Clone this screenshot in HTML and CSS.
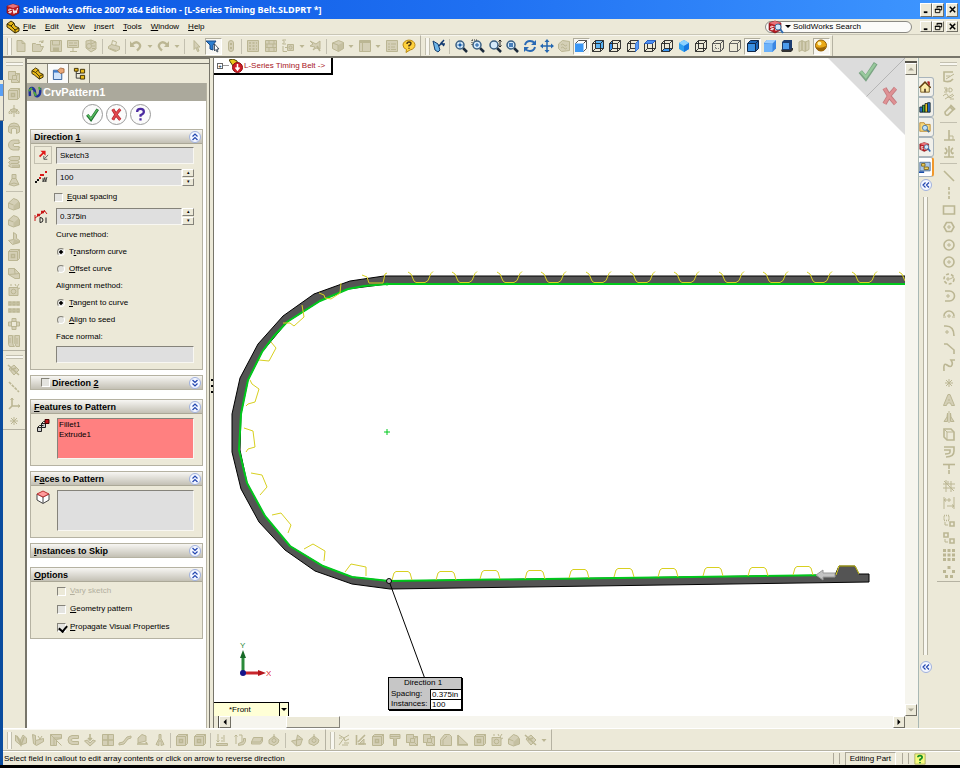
FILE: index.html
```html
<!DOCTYPE html>
<html lang="en">
<head>
  <meta charset="UTF-8">
  <meta name="viewport" content="width=device-width, initial-scale=1.0">
  <title>SolidWorks Office 2007 x64 Edition - [L-Series Timing Belt.SLDPRT *]</title>
  <link rel="stylesheet" href="styles.css">
</head>
<body>
  <!-- Icon sprite -->
  <svg class="sprite" aria-hidden="true">
    <symbol id="new" viewBox="0 0 14 14"><path class="soft" d="M3 1.500h5l3 3v8H3z"/><path d="M8 1.500v3h3"/></symbol>
    <symbol id="open" viewBox="0 0 14 14"><path class="soft" d="M1.500 12.500v-8h3l1 1h4v2h3l-2.500 5z"/><path d="M8 3q2-2 4 0M12 1v2.500h-2"/></symbol>
    <symbol id="save" viewBox="0 0 14 14"><path class="soft" d="M1.500 1.500h11v11h-11z"/><path class="solid" d="M4 8.500h6v4H4z"/><path d="M3.500 1.500v4.500h7V1.500"/></symbol>
    <symbol id="drw" viewBox="0 0 14 14"><path class="soft" d="M1.500 1.500h11v7h-11z"/><path d="M3 4h4M8 4h3M3 6.500h8M4 12.500h7M7 9v3.500"/></symbol>
    <symbol id="asm" viewBox="0 0 14 14"><path class="soft" d="M2 2l5-1 5 2v7l-5 3-5-4z"/><circle cx="5" cy="7" r="2.500"/><path d="M7 1v4l5-2M8 7h3M8 9.500h3"/></symbol>
    <symbol id="print" viewBox="0 0 14 14"><path class="soft" d="M1.500 7.500l3-2 8 2v3l-4 2-7-3z"/><path d="M4.500 6l1-4.500 4 1.500-1 4M3 9.500l6 2"/></symbol>
    <symbol id="undo" viewBox="0 0 14 14"><path class="heavy" d="M3 5.500q4-4 7-1t-2 7"/><path class="solid" d="M1 2v6h5z"/></symbol>
    <symbol id="redo" viewBox="0 0 14 14"><path class="heavy" d="M11 5.500q-4-4-7-1t2 7"/><path class="solid" d="M13 2v6H8z"/></symbol>
    <symbol id="cursor" viewBox="0 0 14 14"><path class="soft" d="M5 1.500v9l2-2 1.500 4 1.500-.5-1.500-4H11z"/></symbol>
    <symbol id="filter" viewBox="0 0 14 14"><path d="M0 2h10L7 6v5l-3-1V6z" fill="#2b7fd0" stroke="#1b4a86"/><path d="M8.500 5v7l1.500-1.500 1 2.500 1-.5-1-2.500h2z" fill="#fff" stroke="#234" stroke-width=".8"/></symbol>
    <symbol id="capsule" viewBox="0 0 14 14"><rect class="soft" x="4.500" y="1.500" width="5" height="11" rx="2.500"/><path class="solid" d="M6 4h2v2H6zM6 8h2v2H6z"/></symbol>
    <symbol id="table" viewBox="0 0 14 14"><path class="soft" d="M1.500 1.500h11v11h-11z"/><path class="bold" stroke-dasharray="2 1.500" d="M3 4h8M3 7h8M3 10h8"/></symbol>
    <symbol id="bricks" viewBox="0 0 14 14"><path class="soft" d="M1.500 1.500h11v11h-11z"/><path d="M1.500 5h11M1.500 8.500h11M5 1.500V5M9 5v3.500M5 8.500v4M10 1.500V5M3 5v3.500M10 8.500v4"/></symbol>
    <symbol id="sum" viewBox="0 0 14 14"><path d="M5 1H1.500L3.500 3 1.500 5H5M2 7v5.500h4M4 8.500h2"/><path class="soft" d="M6.500 5.500h6v6h-6z"/><circle cx="9.500" cy="8.500" r="1.500"/></symbol>
    <symbol id="flag" viewBox="0 0 14 14"><path class="soft" d="M2 2l6 3 4-3v8l-4-1-3 2 2-3-5-1 3-2z"/><path class="bold" d="M9 7l3 5"/></symbol>
    <symbol id="box" viewBox="0 0 14 14"><path class="soft" d="M1.500 4l6-2.500 5 2v6l-5 3-6-3z"/><path class="solid" d="M7 6l5.500-2.500v6L7 12.500z" opacity=".6"/><path d="M1.500 4L7 6v6"/></symbol>
    <symbol id="pane" viewBox="0 0 14 14"><path class="soft" d="M1.500 1.500h11v11h-11z"/><path class="solid" d="M2 2h10v2H2z"/><path d="M4.500 4v8"/></symbol>
    <symbol id="list" viewBox="0 0 14 14"><path class="soft" d="M1.500 1.500h11v11h-11z"/><path d="M3 5h2M6 5h5M3 8h2M6 8h4M3 10.500h2M6 10.500h5"/></symbol>
    <symbol id="help" viewBox="0 0 14 14"><path d="M1 6a6 5 0 1 1 7 5l-4 2.500.5-3A5.500 5 0 0 1 1 6z" fill="#ffd23c" stroke="#b98a14"/><path d="M5 5q0-2 2-2t2 1.500Q9 6 7 6.500v1M7 8.700v1" stroke="#4a3510" stroke-width="1.400"/></symbol>
    <symbol id="down" viewBox="0 0 8 14"><path class="solid" d="M1.500 6h5L4 9z"/></symbol>

    <symbol id="pen" viewBox="0 0 14 14"><path d="M1 2l5 3 2 6-2 2-3-2z" fill="#6db5e8" stroke="#153e6e"/><path d="M12 1L7 7M8 5h5M9 3l3 4" stroke="#123a70" stroke-width="1.400"/></symbol>
    <symbol id="lens" viewBox="0 0 14 14"><path d="M9 9l4 4" stroke="#1c2b3c" stroke-width="2.500"/><circle cx="6" cy="6" r="4" fill="#d5eafa" stroke="#3a5f82" stroke-width="1.500"/></symbol>
    <symbol id="zoom-fit" viewBox="0 0 14 14"><use href="#lens"/><path d="M6 3.500v5M3.500 6h5M5 5l2 2M7 5L5 7" stroke="#1a5ca5"/></symbol>
    <symbol id="zoom-area" viewBox="0 0 14 14"><use href="#lens"/><path d="M1 1h6M1 1v5" stroke="#333" stroke-dasharray="1 1"/><path d="M4 6h4M6 4v4" stroke="#1a5ca5"/></symbol>
    <symbol id="zoom-inout" viewBox="0 0 14 14"><use href="#lens"/><path d="M12 1v7M10.500 2.500L12 1l1.500 1.500M10.500 6.500L12 8l1.500-1.500" stroke="#222"/></symbol>
    <symbol id="zoom-sel" viewBox="0 0 14 14"><use href="#lens"/><path d="M4 5h4M4 7h4" stroke="#1a5ca5" stroke-width="1.400"/></symbol>
    <symbol id="rotate" viewBox="0 0 14 14"><path d="M2 6q1-4 5-4 3 0 4.500 2M12 8q-1 4-5 4-3 0-4.500-2" stroke="#2969b4" stroke-width="2"/><path d="M13 1v5H8zM1 13V8h5z" fill="#2969b4" stroke="none"/></symbol>
    <symbol id="pan" viewBox="0 0 14 14"><path d="M7 2v10M2 7h10" stroke="#2467b0" stroke-width="1.500"/><path d="M7 0l2.500 3h-5zM7 14l2.500-3h-5zM0 7l3-2.500v5zM14 7l-3-2.500v5z" fill="#2467b0" stroke="none"/></symbol>
    <symbol id="stamp" viewBox="0 0 14 14"><path class="soft" d="M1.500 5l4-3.500 7 1v9l-8 1-3-3z"/><path d="M4 6q2-2 3 0t3 0M4 9q2-2 3 0t3 0"/></symbol>
    <symbol id="wire" viewBox="0 0 14 14"><path d="M1.500 4.500h8v8h-8zM4.500 1.500h8v8h-8zM1.500 4.500l3-3M9.500 4.500l3-3M9.500 12.500l3-3M1.500 12.500l3-3" stroke="#222" stroke-width=".9"/></symbol>
    <symbol id="v-front" viewBox="0 0 14 14"><path d="M1.500 4.500l3-3h8v8l-3 3h-8z" fill="#fff" stroke="#444" stroke-width=".9"/><path d="M1 4.500h8.500V13H1z" fill="#3b97f5" stroke="none"/><path d="M9.500 4.500l3-3" stroke="#444"/></symbol>
    <symbol id="v-back" viewBox="0 0 14 14"><path d="M4.500 1.500h8v8h-8z" fill="#5cb4f2" stroke="none"/><use href="#wire"/></symbol>
    <symbol id="v-left" viewBox="0 0 14 14"><path d="M1.500 4.500l3-3v8l-3 3z" fill="#3b97f5" stroke="none"/><use href="#wire"/></symbol>
    <symbol id="v-right" viewBox="0 0 14 14"><use href="#wire"/><path d="M9.500 4.500l3-3v8l-3 3z" fill="#5c9cf5" stroke="#3b77d5"/></symbol>
    <symbol id="v-top" viewBox="0 0 14 14"><use href="#wire"/><path d="M1.500 4.500l3-3h8l-3 3z" fill="#4b8ff5" stroke="#2b63c5"/></symbol>
    <symbol id="v-bottom" viewBox="0 0 14 14"><path d="M1.500 12.500l3-3h8l-3 3z" fill="#3b97f5" stroke="none"/><use href="#wire"/></symbol>
    <symbol id="v-iso" viewBox="0 0 14 14"><path d="M7 1l5 3v6l-5 3-5-3V4z" fill="#30a0f0" stroke="none"/><path d="M7 1l5 3-5 3-5-3z" fill="#8cd2ff" stroke="none"/><path d="M7 7l5-3v6l-5 3z" fill="#1678e0" stroke="none"/></symbol>
    <symbol id="hidden" viewBox="0 0 14 14"><path d="M1.500 4.500h8v8h-8zM1.500 4.500l3-3h8v8l-3 3M9.500 4.500l3-3" stroke="#444" stroke-width=".9"/><path d="M4.500 2v7.500h8M4.500 9.500l-3 3" stroke="#777" stroke-dasharray="1 1"/></symbol>
    <symbol id="removed" viewBox="0 0 14 14"><path d="M1.500 4.500h8v8h-8zM1.500 4.500l3-3h8v8l-3 3M9.500 4.500l3-3" stroke="#555" stroke-width=".9"/></symbol>
    <symbol id="shade-edge" viewBox="0 0 14 14"><path d="M1.500 4.500l3-3h8v8l-3 3h-8z" fill="#1c65b8" stroke="#10284a"/><path d="M2 5h7v7H2z" fill="#3b8fe0" stroke="none"/><path d="M1.500 4.500h8v8M9.500 4.500l3-3" stroke="#10284a"/></symbol>
    <symbol id="shade" viewBox="0 0 14 14"><path d="M1 4l3-3h9v8.500L9.500 13H1z" fill="#3a86e2" stroke="none"/><path d="M1 4.500h8.500V13H1z" fill="#6cb2fa" stroke="none"/><path d="M1 4l3-3h9L9.500 4.500z" fill="#9bcdff" stroke="none"/></symbol>
    <symbol id="shadow" viewBox="0 0 14 14"><path d="M1 11l3-2h9v2l-2 2H2z" fill="#333" stroke="none"/><path d="M2 3l2-2h8v8l-2 2H2z" fill="#1b3c70" stroke="none"/><path d="M3 4h6v6H3z" fill="#4c9bec" stroke="none"/></symbol>
    <symbol id="section" viewBox="0 0 14 14"><path class="soft" d="M2 3l3-1.500 3 1.500 4-1.500v9L8 12.500 5 11l-3 1.500z"/><path class="bold" d="M5 2v9M8.500 3v9"/></symbol>
    <symbol id="gold" viewBox="0 0 14 14"><circle cx="7" cy="6.500" r="5.500" fill="#e9a816" stroke="#946008"/><path d="M2 8q5 2 10-1-1 5-5 5T2 8z" fill="#9a6508" stroke="none"/><circle cx="5.500" cy="4.500" r="2" fill="#fff3b0" stroke="none"/></symbol>

    <!-- Feature icons -->
    <symbol id="boss" viewBox="0 0 14 14"><path class="soft" d="M1.500 1.500h7v2h4v9h-8v-3h-3z"/><path d="M5.500 5.500h4v4h-4zM8.500 1.500v4M1.500 9.500h4M12.500 12.500l-3-3M9.500 5.500l3-2"/></symbol>
    <symbol id="cut" viewBox="0 0 14 14"><path class="soft" d="M1.500 3.500l2-2h9v9l-2 2h-9z"/><path class="bold" d="M4.500 6.500h3v3h-3z"/><path d="M1.500 3.500h9v9M10.500 3.500l2-2"/></symbol>
    <symbol id="revolve" viewBox="0 0 14 14"><path d="M7 1v12M4 6.500q-3 1-2 3 2-1 3 0V6.500M10 6.500q3 1 2 3-2-1-3 0V6.500z"/><path class="soft" d="M3 6q4-3 8 0L9 8H5z"/></symbol>
    <symbol id="dome" viewBox="0 0 14 14"><path class="soft" d="M1.500 11V6q1-4 5.500-4t5.500 4v5l-3 1.500V8q-2.500-2-5 0v4.500z"/><path d="M1.500 6q5-2 11 0"/></symbol>
    <symbol id="sweep" viewBox="0 0 14 14"><path class="soft" d="M12 2H6Q1.500 3 1.500 7T6 12h6V8.500H7q-2-1.500 0-3h5z"/><path d="M12 5.500l1-1.500M12 8.500l1 1.500"/></symbol>
    <symbol id="loft" viewBox="0 0 14 14"><path class="soft" d="M1.500 3l3-1.500h8v3l-2 1 2 1.500-2 1 2 2v2.500h-8l-3-1.500 2-2-2-1.500 2-2z"/><path d="M4 5.500h7M4 8.500h7M5 11h7"/></symbol>
    <symbol id="vase" viewBox="0 0 14 14"><path class="soft" d="M5 1.500h4v4l3 6-5 1.500-5-1.500 3-6z"/><path d="M2 11.500q5-3 10 0M5 5.500h4"/></symbol>
    <symbol id="fillet" viewBox="0 0 14 14"><path class="soft" d="M1.500 6l5-4.500 4 1.500 2 3v5l-6 2-5-2z"/><path class="solid" d="M6.500 13V9L12 4l.5 6.500z" opacity=".6"/><path d="M1.500 6l5 2"/></symbol>
    <symbol id="rib" viewBox="0 0 14 14"><path class="soft" d="M1.500 9.500l5-1v-7l3 2v4l3 2v2l-7 2z"/><path class="solid" d="M7 8l5 2v2l-6 1z" opacity=".6"/></symbol>
    <symbol id="hole" viewBox="0 0 14 14"><path class="soft" d="M2 4.500h9v8H2z"/><circle cx="6.500" cy="8.500" r="2.300"/><path d="M8 1l1 2M12 1l-2 3M4 1v2M11 6l2-1"/></symbol>
    <symbol id="draft" viewBox="0 0 14 14"><path class="soft" d="M1.500 2.500h6l5 5v5H8l-6.500-4z"/><path d="M7.500 2.500L8 8l-6.500.5M8 8l4.500-.5"/></symbol>
    <symbol id="pattern" viewBox="0 0 14 14"><path class="bold" d="M2 2h2v3H2zM6 2h2v3H6zM10 2h2v3h-2zM2 9h2v3H2zM6 9h2v3H6zM10 9h2v3h-2z"/></symbol>
    <symbol id="circular" viewBox="0 0 14 14"><path class="soft" d="M5 1.500h4v3H5zM5 9.500h4v3H5zM1.500 5h3v4h-3zM9.500 5h3v4h-3z"/><path d="M4 5l1-1M9 4l1 1M4 9l1 1M9 10l1-1"/></symbol>
    <symbol id="mirror" viewBox="0 0 14 14"><path class="soft" d="M1.500 1.500h4v8l2 3h-5l-1-2zM8 1.500h4.500v11H9l-1-3z"/><path d="M7 1v9M3 4v5M10 4v6"/></symbol>
    <symbol id="plane" viewBox="0 0 14 14"><path class="soft" d="M2 6l5-4 5 5-5 5z"/><path class="bold" d="M1 2l11 10M4 7l5-2"/></symbol>
    <symbol id="axis" viewBox="0 0 14 14"><path class="bold" stroke-dasharray="3 1" d="M2 2l10 10"/></symbol>
    <symbol id="csys" viewBox="0 0 14 14"><path class="bold" d="M5 1v8h8M5 9l-3 3"/><path d="M3.500 3L5 1l1.500 2M11 7.500L13 9l-2 1.500"/></symbol>
    <symbol id="point" viewBox="0 0 14 14"><path d="M7 3v8M3 7h8M4 4l6 6M10 4l-6 6"/></symbol>

    <!-- Sheet metal and surface icons -->
    <symbol id="flange" viewBox="0 0 14 14"><path class="soft" d="M1.500 2l5 5V12l-5-4zM6.500 12V7L9 2l3.500 3v5z"/><path class="bold" d="M3 3l4 9 3-8"/></symbol>
    <symbol id="edge" viewBox="0 0 14 14"><path class="soft" d="M1.500 1.500l3 1v5l8-2v3l-7 4-3-2z"/><path d="M4.500 8v4M7 3l2 3 2-3"/></symbol>
    <symbol id="miter" viewBox="0 0 14 14"><path class="soft" d="M1.500 1.500h11v4l-5 1v6h-6z"/><path d="M1.500 1.500l11 11M5 5h7M5 5v7"/></symbol>
    <symbol id="hem" viewBox="0 0 14 14"><path class="soft" d="M12.500 2.500H6Q2 3 2 7t4 4.500h6.500v-3H7Q5 8 5 7t2-1.500h5.500z"/></symbol>
    <symbol id="jog" viewBox="0 0 14 14"><path class="bold" d="M7 1v6M5 5l2 2 2-2"/><path class="soft" d="M1.500 8l3-1 2.500 3 3-3 2.500 1-5.500 5z"/></symbol>
    <symbol id="grid4" viewBox="0 0 14 14"><path class="soft" d="M1.500 1.500h11v11h-11z"/><path class="bold" d="M7 1v12M1 7h12"/></symbol>
    <symbol id="step" viewBox="0 0 14 14"><path class="soft" d="M1 10l4-1 4-5 4-1v2l-3 1-4 5-5 1z"/></symbol>
    <symbol id="fold" viewBox="0 0 14 14"><path class="soft" d="M3 10V5l4-3.500 4 1.500v5z"/><path class="bold" d="M2 11h10l-1-2"/></symbol>
    <symbol id="cone" viewBox="0 0 14 14"><path class="soft" d="M6 1.500h2v4l3 6-3 1V8H6v4.500l-3-1 3-6z"/></symbol>
    <symbol id="arrows" viewBox="0 0 14 14"><path d="M3 1v8M1.500 7.500L3 9l1.500-1.500M9 2v7M6 5h2M6 8h2"/><path class="soft" d="M1.500 10.500h11v2h-11z"/></symbol>
    <symbol id="lift" viewBox="0 0 14 14"><path d="M3 11V2M1.500 3.500L3 2l1.500 1.500M6 2h3v7"/><path class="soft" d="M5.500 12.500l5-1 2-3v-3h-2v3l-5 2z"/></symbol>
    <symbol id="flat" viewBox="0 0 14 14"><path class="soft" d="M1.500 9l2-4.500h9v4l-2 2.500h-9z"/><path d="M1.500 9h9l2-4.500"/></symbol>
    <symbol id="knob" viewBox="0 0 14 14"><path class="soft" d="M2 7l5-4 5 4-1 3-4 2.500-5-2z"/><circle cx="7" cy="7.500" r="2"/><path d="M7 1v4"/></symbol>
    <symbol id="corner" viewBox="0 0 14 14"><path class="soft" d="M1.500 8l5-1 1-5 5 4-2 6-4 1z"/><path d="M6.500 7v5.500M6.500 7l6-1"/></symbol>
    <symbol id="weld" viewBox="0 0 14 14"><path d="M2 12L7 5l5-3M2 2l5 3 1 3 4-2M7 10h5M5 12h6M2 5h3"/></symbol>
    <symbol id="trim" viewBox="0 0 14 14"><path class="bold" d="M2.500 2v10M4 11h8M4 9l7-7"/><path class="soft" d="M5 11l5-5v5z"/></symbol>
    <symbol id="pipe" viewBox="0 0 14 14"><path class="soft" d="M2 1.500h10v4H8.500v7h-3v-7H2z"/><path d="M2 3.500h10M7 5v7"/></symbol>
    <symbol id="wedge" viewBox="0 0 14 14"><path class="soft" d="M2 2l10 9.500H2z"/><path class="bold" d="M2 2v10h10"/></symbol>
    <symbol id="round" viewBox="0 0 14 14"><path class="soft" d="M1.500 12.500v-6l4-5h5l2 2v9z"/><path d="M4 12V7l4-4"/></symbol>

    <!-- Sketch icons -->
    <symbol id="sk-edit" viewBox="0 0 14 14"><path class="bold" d="M11 2H2v9q6 2 9-2"/><path d="M4 9l8-5M4 6h4"/></symbol>
    <symbol id="sk-3d" viewBox="0 0 14 14"><path d="M2 1h3v2H3h2v2H2M7 1v4q4 0 3-3-1-1-3-1M1 9q4-4 5 0t6-1M3 12l8-5M8 12h4"/></symbol>
    <symbol id="sk-modify" viewBox="0 0 14 14"><path class="bold" d="M3 8l5-5 3 3-5 5q-3 1-3-3zM8 3l1-1.500L12.500 5 11 6"/></symbol>
    <symbol id="sk-perp" viewBox="0 0 14 14"><path class="bold" d="M2 12h11M7 2v10"/><path d="M7 8h4v4"/></symbol>
    <symbol id="sk-rel" viewBox="0 0 14 14"><path class="bold" d="M2 12h10M7 1v11M3 3q4 3 0 6M11 3q-4 3 0 6"/><path d="M2 8h3M9 8h3"/></symbol>
    <symbol id="sk-line" viewBox="0 0 14 14"><path class="bold" d="M2 2l10 10"/></symbol>
    <symbol id="sk-center" viewBox="0 0 14 14"><path class="bold" d="M7 1v12" stroke-dasharray="3 1.500"/></symbol>
    <symbol id="sk-rect" viewBox="0 0 14 14"><path class="bold" d="M1.500 3h11v8h-11z"/></symbol>
    <symbol id="sk-poly" viewBox="0 0 14 14"><path class="bold" d="M4.500 2.500h5L12 7l-2.500 4.500h-5L2 7z"/><path d="M5 7h4M7 5v4"/></symbol>
    <symbol id="sk-circle" viewBox="0 0 14 14"><circle class="bold" cx="7" cy="7" r="5"/><path d="M5 7h4M7 5v4"/></symbol>
    <symbol id="sk-percircle" viewBox="0 0 14 14"><circle class="bold" cx="7" cy="7" r="5" stroke-dasharray="3 2"/><path d="M4 7h4M6 5v4M8 7l4-2"/></symbol>
    <symbol id="sk-arc" viewBox="0 0 14 14"><path class="bold" d="M3 2h4.500a5 5 0 0 1 0 10H3"/><path d="M4 7h4M6 5v4"/></symbol>
    <symbol id="sk-arc3" viewBox="0 0 14 14"><path class="bold" d="M2 9a5 5 0 0 1 10 0"/><path d="M5 9h4M7 7v4M1 10h3M10 10h3"/></symbol>
    <symbol id="sk-fillet" viewBox="0 0 14 14"><path class="bold" d="M2 2h2q8 0 8 10"/><path d="M3 8h4M5 6v4"/></symbol>
    <symbol id="sk-chamfer" viewBox="0 0 14 14"><path class="bold" d="M2 3h3l7 6v4"/></symbol>
    <symbol id="sk-spline" viewBox="0 0 14 14"><path class="bold" d="M2 13Q1 4 5 7t5 0q1-2-1-5h4"/></symbol>
    <symbol id="sk-text" viewBox="0 0 14 14"><path class="soft" d="M6 1.500h2l4.500 11h-3L8.500 10h-3l-1 2.500h-3z"/><path d="M6 7h2"/></symbol>
    <symbol id="sk-mirror" viewBox="0 0 14 14"><path d="M7 1v12"/><path class="soft" d="M5.500 3v8.500H2L5 7zM8.500 3v8.500H12L9 7z"/></symbol>
    <symbol id="sk-convert" viewBox="0 0 14 14"><path class="bold" d="M2 2h7l3 3v8H5L2 10z"/><path d="M2 2l3 3h7M5 5v8"/></symbol>
    <symbol id="sk-offset" viewBox="0 0 14 14"><path class="bold" d="M2 2h10v4q0 6-8 6M2 5h6v2q0 2-5 2"/></symbol>
    <symbol id="sk-trim" viewBox="0 0 14 14"><path class="bold" d="M1 2.500h12"/><path class="bold" d="M7 3v10" stroke-dasharray="4 1"/></symbol>
    <symbol id="sk-ext" viewBox="0 0 14 14"><path d="M1 5h12M1 9h12M4 1v12M9 2v11M2 2l10 10M6 2v3"/></symbol>
    <symbol id="sk-dim" viewBox="0 0 14 14"><path d="M2 1v12M12 1v12M2 4h7M5 10h7M4 2.500L2 4l2 1.500M10 8.500l2 1.500-2 1.500M7 2v4"/></symbol>
    <symbol id="sk-move" viewBox="0 0 14 14"><path class="bold" d="M2 1.500h5v5H2z" stroke-dasharray="1 1"/><path class="bold" d="M8 8h4v4H8z"/><path d="M3 8v3h3"/></symbol>
    <symbol id="sk-copy" viewBox="0 0 14 14"><path class="bold" d="M2 2h4v4H2zM8 8h4v4H8z"/><path d="M3 8v3h3"/></symbol>
    <symbol id="sk-grid" viewBox="0 0 14 14"><path class="solid" d="M1 1h3v3H1zM5.500 1h3v3h-3zM10 1h3v3h-3zM1 5.500h3v3H1zM5.500 5.500h3v3h-3zM10 5.500h3v3h-3zM1 10h3v3H1zM5.500 10h3v3h-3zM10 10h3v3h-3z"/></symbol>
    <symbol id="sk-ring" viewBox="0 0 14 14"><path class="solid" d="M5.500 1h3v3h-3zM1 5h3v3H1zM10 5h3v3h-3zM3 10h3v3H3zM8 10h3v3H8z"/></symbol>

    <!-- Colour icons -->
    <symbol id="sw" viewBox="0 0 14 14"><path d="M1 3l6-2 6 2v7l-6 3-6-3z" fill="#b81c22" stroke="#6a0c10" stroke-width=".6"/><path d="M1 3l6-2 6 2-6 2z" fill="#e8737a" stroke="none"/><path d="M5.500 6.500q-3-1-3 .5t3 1.500q0 2-3 1M7 6l1 4.500 1-3 1 2.500 1.500-5" stroke="#fff"/></symbol>
    <symbol id="sw-search" viewBox="0 0 16 14"><use href="#sw" width="14" height="14"/><circle cx="10" cy="7" r="3" fill="#cfe8fa" stroke="#3f6f9c"/><path d="M12 9l3 4" stroke="#2f6cb0" stroke-width="2"/></symbol>
    <symbol id="part" viewBox="0 0 14 14"><path d="M1 4l4-3 3 2 1 3 4 2v3l-4 2-5-4-3-2z" fill="#e8b818" stroke="#3a2d05"/><path d="M1 4l4 2 4 4v3M5 6l3-3M9 10l4-2" stroke="#3a2d05"/></symbol>
    <symbol id="prop" viewBox="0 0 14 14"><path d="M1.500 3.500h9v10h-9z" fill="#cfe4fb" stroke="#2b5c9c"/><path d="M2 4h8v2H2z" fill="#3c7ed0" stroke="none"/><path d="M6 4l3-3 4 1v4L9 7z" fill="#e9a878" stroke="#8a4c1e" stroke-width=".7"/></symbol>
    <symbol id="config" viewBox="0 0 14 14"><path d="M3.500 3v9M3.500 7H8M3.500 12H8" stroke="#333"/><path d="M1.500 1.500h4v3h-4zM8 2.500h4.500v4H8zM8 9h4.500v4H8z" fill="#e8b818" stroke="#3a2d05"/></symbol>
    <symbol id="curve" viewBox="0 0 14 14"><path d="M2 11Q1 2 4 3t3 5 3 3 2-8" stroke="#1d2f9c" stroke-width="2.500"/><path d="M1 6l3-3M6 7l2 4M11 2l1 3" stroke="#4fa63a" stroke-width="2"/></symbol>
    <symbol id="error" viewBox="0 0 14 14"><path d="M0 1l4-1 4 2 1 4-5 1z" fill="#e8c81c" stroke="#463a08"/><circle cx="8.500" cy="8.500" r="5" fill="#cf1f27" stroke="#8a0d13"/><path d="M8.500 5v5M6.500 8.500l2 2.500 2-2.500" stroke="#fff" stroke-width="1.500"/></symbol>
    <symbol id="check" viewBox="0 0 20 20"><path d="M3 10.500l5 6L17 3" stroke="#1c6e2c" stroke-width="4"/><path d="M3.500 10.500l4.500 5L16.500 3.500" stroke="#56b85e" stroke-width="2.200"/></symbol>
    <symbol id="cross" viewBox="0 0 20 20"><path d="M5 3q4 8 10 14M15 3Q9 9 5 17" stroke="#a81c24" stroke-width="4"/><path d="M5 3q4 8 10 14M15 3Q9 9 5 17" stroke="#e2484e" stroke-width="2.400"/></symbol>
    <symbol id="quest" viewBox="0 0 20 20"><path d="M5.500 6.500q0-4 4.500-4t4.500 4q0 2-4.500 4.500v2M10 15v3" stroke="#4b2aa0" stroke-width="3"/></symbol>
    <symbol id="dir" viewBox="0 0 14 14"><path d="M3 9l5-5" stroke="#e01818" stroke-width="2"/><path d="M4 2h6v6z" fill="#e01818" stroke="none"/><path d="M13 7L8.500 11.500M8 8v4h4" stroke="#444"/></symbol>
    <symbol id="count" viewBox="0 0 14 14"><path d="M1 12h2M3 10h2" stroke="#111" stroke-width="2"/><path d="M5 8h2M8 5h2M11 2h2M6 5h2" stroke="#d81818" stroke-width="2"/><path d="M9 12l2-5M11 12l2-5M8 9h5M8 11h5" stroke="#222" stroke-width=".8"/></symbol>
    <symbol id="spacing" viewBox="0 0 14 14"><path d="M1 9l10-7M1 6v6M10 1l3 4" stroke="#c81818"/><path d="M3 6h3M7 3h3" stroke="#c81818" stroke-width="2.500"/><path d="M6 8.500v5q3 0 3-2.500t-3-2.500M12 8.500V14" stroke="#222"/></symbol>
    <symbol id="feat" viewBox="0 0 14 14"><path d="M1.500 9.500h4v4h-4zM5.500 5.500h4v4h-4z" fill="#ccc" stroke="#222"/><path d="M9 1.500h4v4H9z" fill="#c4151c" stroke="#400"/><path d="M1.500 9.500l2-2h4M5.500 5.500l2-2H9" stroke="#222"/></symbol>
    <symbol id="faces" viewBox="0 0 14 14"><path d="M1 4v6l6 3.500 6-3.500V4L7 7zM7 7v6" fill="#fff" stroke="#444"/><path d="M1 4l6-3 6 3-6 3z" fill="#ff9c9c" stroke="#b33"/></symbol>
    <symbol id="expand" viewBox="0 0 12 12"><circle cx="6" cy="6" r="5.500" fill="#f4f7ff" stroke="#9fb0dc"/><path d="M3.500 5.500L6 3l2.500 2.500M3.500 9L6 6.500 8.500 9" stroke="#2447b0" stroke-width="1.200"/></symbol>
    <symbol id="home" viewBox="0 0 14 14"><path d="M2 7l5-5 5 5v6H2z" fill="#fbeaa8" stroke="#6b4c10"/><path d="M0 8l7-7 7 7" stroke="#5e3a0a" stroke-width="1.500"/><path d="M6 9h2v4H6z" fill="#55402a" stroke="none"/><path d="M10 1h2v4z" fill="#b02020" stroke="#b02020"/></symbol>
    <symbol id="library" viewBox="0 0 14 14"><path d="M1 7h3v6H1zM10 2h3v11h-3z" fill="#2b74d8" stroke="#122"/><path d="M4 5h3v8H4z" fill="#38a848" stroke="#122"/><path d="M7 3h3v10H7z" fill="#e8c41c" stroke="#122"/></symbol>
    <symbol id="explorer" viewBox="0 0 14 14"><path d="M1 2h5l1 2h6v8H1z" fill="#f6d77c" stroke="#b8862a"/><circle cx="7" cy="8" r="3" fill="#bfe0fa" stroke="#42719c"/><path d="M9 10l3 3" stroke="#42719c" stroke-width="2"/></symbol>
    <symbol id="palette" viewBox="0 0 14 14"><path d="M1 1.500h12v10H1z" fill="#a9c7e8" stroke="#486a90"/><path d="M3 3h4v3H3zM6 7h5v3H6z" fill="#f2d258" stroke="#776018"/><path d="M0 13h6" stroke="#1b4fa8" stroke-width="2"/></symbol>
    <symbol id="tip" viewBox="0 0 14 14"><path d="M1 1h12v12H1z" fill="#f5fb7c" stroke="#a8a860"/><path d="M4.500 5q0-2 2.500-2t2.500 2Q9.500 6.500 7 7.500V9M7 10.500v1.500" stroke="#118a24" stroke-width="2"/></symbol>
    <symbol id="min" viewBox="0 0 10 10"><path d="M2 8h4" stroke="#000" stroke-width="2"/></symbol>
    <symbol id="restore" viewBox="0 0 10 10"><path d="M3.500 3.500v-2h5v4h-2M3 2h6M1.500 4.500h5v4h-5zM1 5h6" stroke="#000"/></symbol>
    <symbol id="close" viewBox="0 0 10 10"><path d="M2 2l6 6M8 2L2 8" stroke="#000" stroke-width="1.700"/></symbol>
    <symbol id="tri-up" viewBox="0 0 10 10"><path d="M2 6.500h6L5 3.500z" fill="#a8a593" stroke="none"/></symbol>
    <symbol id="tri-down" viewBox="0 0 10 10"><path d="M2 3.500h6L5 6.500z" fill="#a8a593" stroke="none"/></symbol>
    <symbol id="tri-left" viewBox="0 0 10 10"><path d="M6.500 2v6l-3-3z" fill="#000" stroke="none"/></symbol>
    <symbol id="tri-right" viewBox="0 0 10 10"><path d="M3.500 2v6l3-3z" fill="#000" stroke="none"/></symbol>
  </svg>

  <header class="title-bar">
    <svg class="icon app-icon"><use href="#sw"/></svg>
    <h1>SolidWorks Office 2007 x64 Edition - [L-Series Timing Belt.SLDPRT *]</h1>
    <div class="win-buttons tall">
      <button aria-label="Minimize"><svg><use href="#min"/></svg></button>
      <button aria-label="Restore"><svg><use href="#restore"/></svg></button>
      <button aria-label="Close" class="apart"><svg><use href="#close"/></svg></button>
    </div>
  </header>

  <div class="frame">
    <div class="back-window"></div>
    <nav class="menu-bar">
      <svg class="icon"><use href="#part"/></svg>
      <button><u>F</u>ile</button>
      <button><u>E</u>dit</button>
      <button><u>V</u>iew</button>
      <button><u>I</u>nsert</button>
      <button><u>T</u>ools</button>
      <button><u>W</u>indow</button>
      <button><u>H</u>elp</button>
      <label class="search">
        <svg class="icon"><use href="#sw-search"/></svg>
        <span class="caret"></span>
        <input type="text" value="SolidWorks Search" aria-label="SolidWorks Search">
      </label>
      <div class="win-buttons">
        <button aria-label="Minimize document"><svg><use href="#min"/></svg></button>
        <button aria-label="Restore document"><svg><use href="#restore"/></svg></button>
        <button aria-label="Close document" class="apart"><svg><use href="#close"/></svg></button>
      </div>
    </nav>

    <div class="toolbars top">
      <div class="toolbar standard">
        <i class="grip"></i>
        <button class="tool" aria-label="New"><svg><use href="#new"/></svg></button>
        <button class="tool" aria-label="Open"><svg><use href="#open"/></svg></button>
        <button class="tool" aria-label="Save"><svg><use href="#save"/></svg></button>
        <button class="tool" aria-label="Make drawing"><svg><use href="#drw"/></svg></button>
        <button class="tool" aria-label="Make assembly"><svg><use href="#asm"/></svg></button>
        <i class="sep"></i>
        <button class="tool" aria-label="Print"><svg><use href="#print"/></svg></button>
        <i class="sep"></i>
        <button class="tool" aria-label="Undo"><svg><use href="#undo"/></svg></button>
        <button class="tool drop" aria-label="Undo list"><svg><use href="#down"/></svg></button>
        <button class="tool" aria-label="Redo"><svg><use href="#redo"/></svg></button>
        <button class="tool drop" aria-label="Redo list"><svg><use href="#down"/></svg></button>
        <i class="sep"></i>
        <button class="tool" aria-label="Select"><svg><use href="#cursor"/></svg></button>
        <button class="tool pressed" aria-label="Selection filter"><svg><use href="#filter"/></svg></button>
        <button class="tool" aria-label="Rebuild"><svg><use href="#capsule"/></svg></button>
        <i class="sep"></i>
        <button class="tool" aria-label="Design table"><svg><use href="#table"/></svg></button>
        <button class="tool" aria-label="Texture"><svg><use href="#bricks"/></svg></button>
        <button class="tool" aria-label="Equations"><svg><use href="#sum"/></svg></button>
        <button class="tool drop" aria-label="Tools list"><svg><use href="#down"/></svg></button>
        <button class="tool" aria-label="Macro"><svg><use href="#flag"/></svg></button>
        <i class="sep"></i>
        <button class="tool" aria-label="Appearance"><svg><use href="#box"/></svg></button>
        <button class="tool drop" aria-label="Appearance list"><svg><use href="#down"/></svg></button>
        <button class="tool" aria-label="Layout"><svg><use href="#pane"/></svg></button>
        <button class="tool drop" aria-label="Layout list"><svg><use href="#down"/></svg></button>
        <button class="tool" aria-label="Options"><svg><use href="#list"/></svg></button>
        <button class="tool" aria-label="Help"><svg><use href="#help"/></svg></button>
      </div>
      <div class="toolbar view">
        <i class="grip"></i>
        <button class="tool" aria-label="Previous view"><svg><use href="#pen"/></svg></button>
        <i class="sep"></i>
        <button class="tool" aria-label="Zoom to fit"><svg><use href="#zoom-fit"/></svg></button>
        <button class="tool" aria-label="Zoom to area"><svg><use href="#zoom-area"/></svg></button>
        <button class="tool" aria-label="Zoom in/out"><svg><use href="#zoom-inout"/></svg></button>
        <button class="tool" aria-label="Zoom to selection"><svg><use href="#zoom-sel"/></svg></button>
        <button class="tool" aria-label="Rotate view"><svg><use href="#rotate"/></svg></button>
        <button class="tool" aria-label="Pan"><svg><use href="#pan"/></svg></button>
        <button class="tool" aria-label="3D drawing view"><svg><use href="#stamp"/></svg></button>
        <button class="tool pressed" aria-label="Front"><svg><use href="#v-front"/></svg></button>
        <button class="tool" aria-label="Back"><svg><use href="#v-back"/></svg></button>
        <button class="tool" aria-label="Left"><svg><use href="#v-left"/></svg></button>
        <button class="tool" aria-label="Right"><svg><use href="#v-right"/></svg></button>
        <button class="tool" aria-label="Top"><svg><use href="#v-top"/></svg></button>
        <button class="tool" aria-label="Bottom"><svg><use href="#v-bottom"/></svg></button>
        <button class="tool" aria-label="Isometric"><svg><use href="#v-iso"/></svg></button>
        <button class="tool" aria-label="Wireframe"><svg><use href="#wire"/></svg></button>
        <button class="tool" aria-label="Hidden lines visible"><svg><use href="#hidden"/></svg></button>
        <button class="tool" aria-label="Hidden lines removed"><svg><use href="#removed"/></svg></button>
        <button class="tool pressed" aria-label="Shaded with edges"><svg><use href="#shade-edge"/></svg></button>
        <button class="tool" aria-label="Shaded"><svg><use href="#shade"/></svg></button>
        <button class="tool" aria-label="Shadows"><svg><use href="#shadow"/></svg></button>
        <button class="tool" aria-label="Section view"><svg><use href="#section"/></svg></button>
        <button class="tool pressed" aria-label="RealView"><svg><use href="#gold"/></svg></button>
      </div>
    </div>

    <main class="workspace">
      <div class="side-tools left">
        <i class="grip"></i>
        <div class="tool-column features">
          <button class="tool" aria-label="Extruded boss"><svg><use href="#boss"/></svg></button>
          <button class="tool" aria-label="Extruded cut"><svg><use href="#cut"/></svg></button>
          <button class="tool" aria-label="Revolve"><svg><use href="#revolve"/></svg></button>
          <button class="tool" aria-label="Revolved cut"><svg><use href="#dome"/></svg></button>
          <button class="tool" aria-label="Sweep"><svg><use href="#sweep"/></svg></button>
          <button class="tool" aria-label="Swept cut"><svg><use href="#loft"/></svg></button>
          <button class="tool" aria-label="Loft"><svg><use href="#vase"/></svg></button>
          <i class="sep"></i>
          <button class="tool" aria-label="Fillet"><svg><use href="#fillet"/></svg></button>
          <button class="tool" aria-label="Chamfer"><svg><use href="#fillet"/></svg></button>
          <button class="tool" aria-label="Rib"><svg><use href="#rib"/></svg></button>
          <button class="tool" aria-label="Shell"><svg><use href="#cut"/></svg></button>
          <button class="tool" aria-label="Draft"><svg><use href="#draft"/></svg></button>
          <button class="tool" aria-label="Hole wizard"><svg><use href="#hole"/></svg></button>
          <button class="tool" aria-label="Linear pattern"><svg><use href="#pattern"/></svg></button>
          <button class="tool" aria-label="Circular pattern"><svg><use href="#circular"/></svg></button>
          <button class="tool" aria-label="Mirror"><svg><use href="#mirror"/></svg></button>
        </div>
        <i class="rule"></i>
        <i class="grip"></i>
        <div class="tool-column">
          <button class="tool" aria-label="Plane"><svg><use href="#plane"/></svg></button>
          <button class="tool" aria-label="Axis"><svg><use href="#axis"/></svg></button>
          <button class="tool" aria-label="Coordinate system"><svg><use href="#csys"/></svg></button>
          <button class="tool" aria-label="Point"><svg><use href="#point"/></svg></button>
        </div>
        <i class="rule"></i>
      </div>

      <aside class="manager">
        <div class="tabs">
          <button aria-label="FeatureManager"><svg class="icon"><use href="#part"/></svg></button>
          <button class="active" aria-label="PropertyManager"><svg class="icon"><use href="#prop"/></svg></button>
          <button aria-label="ConfigurationManager"><svg class="icon"><use href="#config"/></svg></button>
        </div>
        <div class="sheet">
          <h2><svg class="icon"><use href="#curve"/></svg>CrvPattern1</h2>
          <div class="confirm">
            <button aria-label="OK"><svg class="icon"><use href="#check"/></svg></button>
            <button aria-label="Cancel"><svg class="icon"><use href="#cross"/></svg></button>
            <button aria-label="Help"><svg class="icon"><use href="#quest"/></svg></button>
          </div>

          <section class="group">
            <h3><span>Direction <u>1</u></span><button aria-label="Collapse"><svg class="icon"><use href="#expand"/></svg></button></h3>
            <div class="group-body">
              <div class="row field">
                <button class="dir" aria-label="Reverse direction"><svg class="icon"><use href="#dir"/></svg></button>
                <input type="text" value="Sketch3" aria-label="Pattern direction">
              </div>
              <div class="row field">
                <svg class="icon"><use href="#count"/></svg>
                <input type="text" value="100" aria-label="Number of instances">
                <span class="spin"><button aria-label="More instances">▴</button><button aria-label="Fewer instances">▾</button></span>
              </div>
              <label class="row tick outdent"><input type="checkbox"><span><u>E</u>qual spacing</span></label>
              <div class="row field short">
                <svg class="icon"><use href="#spacing"/></svg>
                <input type="text" value="0.375in" aria-label="Spacing">
                <span class="spin"><button aria-label="More spacing">▴</button><button aria-label="Less spacing">▾</button></span>
              </div>
              <p class="row line">Curve method:</p>
              <label class="row line tick"><input type="radio" name="curve" checked><span>T<u>r</u>ansform curve</span></label>
              <label class="row line tick"><input type="radio" name="curve"><span><u>O</u>ffset curve</span></label>
              <p class="row line">Alignment method:</p>
              <label class="row line tick"><input type="radio" name="align" checked><span><u>T</u>angent to curve</span></label>
              <label class="row line tick"><input type="radio" name="align"><span><u>A</u>lign to seed</span></label>
              <p class="row line"><label for="face-normal">Face normal:</label></p>
              <div class="row normal"><input type="text" id="face-normal"></div>
            </div>
          </section>

          <section class="group collapsed">
            <h3><label><input type="checkbox"><span>Direction <u>2</u></span></label><button aria-label="Expand"><svg class="icon flip"><use href="#expand"/></svg></button></h3>
          </section>

          <section class="group">
            <h3><span><u>F</u>eatures to Pattern</span><button aria-label="Collapse"><svg class="icon"><use href="#expand"/></svg></button></h3>
            <div class="picker">
              <svg class="icon"><use href="#feat"/></svg>
              <select class="active" multiple size="4" aria-label="Features to Pattern">
                <option>Fillet1</option>
                <option>Extrude1</option>
              </select>
            </div>
          </section>

          <section class="group">
            <h3><span>F<u>a</u>ces to Pattern</span><button aria-label="Collapse"><svg class="icon"><use href="#expand"/></svg></button></h3>
            <div class="picker">
              <svg class="icon"><use href="#faces"/></svg>
              <select multiple size="4" aria-label="Faces to Pattern"></select>
            </div>
          </section>

          <section class="group collapsed">
            <h3><span><u>I</u>nstances to Skip</span><button aria-label="Expand"><svg class="icon flip"><use href="#expand"/></svg></button></h3>
          </section>

          <section class="group">
            <h3><span><u>O</u>ptions</span><button aria-label="Collapse"><svg class="icon"><use href="#expand"/></svg></button></h3>
            <div class="options">
              <label class="row tick"><input type="checkbox" disabled><span><u>V</u>ary sketch</span></label>
              <label class="row tick"><input type="checkbox"><span><u>G</u>eometry pattern</span></label>
              <label class="row tick"><input type="checkbox" checked><span><u>P</u>ropagate Visual Properties</span></label>
            </div>
          </section>
        </div>
      </aside>

      <div class="splitter"><i></i><i></i><i></i></div>

      <div class="viewport">
        <div class="canvas">
          <svg class="model" role="img" aria-label="Timing belt model">
            <defs>
              <path id="tooth-down" d="M-12 -9l3 2 3 7 2 1.500h9l3-2 3-7 2-2"/>
              <path id="tooth-up" d="M-10 0l2-7 2-1.500H6l2 1.500 2 7"/>
            </defs>
            <path class="belt" d="M2000 218H170L136 223L100 236L69 258L44 286L26 320L18 356V394L27 431L45 464L71 492L101 513L138 526L176 531L655 524V516H645L641 508H625L621 517L175 523L138 519L109 508L76 488L51 458L33 425L26 392L27 356L34 322L48 294L73 264L106 243L134 231L173 226H2000z"/>
            <path class="path" d="M2000 226H173L150 228L134 231L106 243L73 264L60 278L48 294L34 322L27 356L25 392L33 425L51 458L76 488L109 508L138 519L175 523L621 517"/>
            <circle cx="173" cy="226" r="1.500" fill="#00d020"/>
            <g class="teeth">
              <use href="#tooth-down" x="206" y="223"/><use href="#tooth-down" x="250" y="223"/>
              <use href="#tooth-down" x="295" y="223"/><use href="#tooth-down" x="339" y="223"/>
              <use href="#tooth-down" x="384" y="223"/><use href="#tooth-down" x="428" y="223"/>
              <use href="#tooth-down" x="472" y="223"/><use href="#tooth-down" x="517" y="223"/>
              <use href="#tooth-down" x="561" y="223"/><use href="#tooth-down" x="605" y="223"/>
              <use href="#tooth-down" x="650" y="223"/><use href="#tooth-down" x="697" y="223"/>
              <use href="#tooth-up" x="188" y="522"/><use href="#tooth-up" x="232" y="522"/>
              <use href="#tooth-up" x="276" y="521"/><use href="#tooth-up" x="321" y="521"/>
              <use href="#tooth-up" x="365" y="520"/><use href="#tooth-up" x="410" y="519"/>
              <use href="#tooth-up" x="454" y="519"/><use href="#tooth-up" x="499" y="518"/>
              <use href="#tooth-up" x="544" y="518"/><use href="#tooth-up" x="589" y="517"/>
              <path d="M148 217l5 2 2 6h14l2-9 2-1"/>
              <path d="M105 235l5 2 1 3 6 1 9-6 1-10"/>
              <path d="M69 265h7l4 3 10-9-2-12"/>
              <path d="M45 302l10 1 7-13-5-6"/>
              <path d="M32 348l2-2 7-2 4-13-7-5-2-4"/>
              <path d="M30 370l9 3 2 16-7 2-2 3"/>
              <path d="M37 415l11 2 5 12-7 8"/>
              <path d="M58 457l9-2 10 12-3 8"/>
              <path d="M90 491l9-5 12 7-1 10"/>
              <path d="M131 514l6-8 15 3v9"/>
              <path d="M622 517l3-9h16l4 8"/>
            </g>
            <path d="M170 374h6M173 371v6" stroke="#00c81c"/>
            <path d="M602 517l7-5v3h12v4h-12v3z" fill="#c4c4c4" stroke="#999"/>
            <path d="M175 523l36 98" stroke="#000"/>
            <circle cx="175" cy="523" r="2.500" fill="#bbb" stroke="#000"/>
          </svg>

          <svg class="triad" viewBox="0 0 36 40" role="img" aria-label="View orientation">
            <path d="M8 33V16" stroke="#2a8a3a" stroke-width="3"/><path d="M8 10l3 8H5z" fill="#176a27"/>
            <path d="M8 33h16" stroke="#c8262c" stroke-width="3"/><path d="M31 33l-8-3v6z" fill="#b3151b"/>
            <circle cx="8" cy="33" r="3" fill="#15158c"/>
            <text x="5" y="8" fill="#2a8a3a">Y</text><text x="31" y="36" fill="#e0262c">X</text>
          </svg>

          <div class="flyout">
            <button class="plus" aria-label="Expand tree">+</button><i></i>
            <svg class="icon"><use href="#error"/></svg>
            <span>L-Series Timing Belt -&gt;</span>
          </div>

          <div class="confirm-corner">
            <svg viewBox="0 0 77 77"><path d="M0 0h77v77z" fill="#dcdcdc"/><path d="M38.500 38.500L77 0" stroke="#b5b5b5"/></svg>
            <button class="ok" aria-label="Accept"><svg class="icon"><use href="#check"/></svg></button>
            <button class="no" aria-label="Discard"><svg class="icon"><use href="#cross"/></svg></button>
          </div>

          <div class="callout">
            <h4>Direction 1</h4>
            <label for="c-spacing">Spacing:</label><input id="c-spacing" type="text" value="0.375in">
            <label for="c-count">Instances:</label><input id="c-count" type="text" value="100">
          </div>

          <div class="view-name">
            <select aria-label="View orientation"><option>*Front</option></select>
            <span class="caret"></span>
          </div>
        </div>
        <div class="scroll vertical">
          <i class="split"></i>
          <button aria-label="Scroll up"><svg><use href="#tri-up"/></svg></button>
          <div class="track"></div>
          <button aria-label="Scroll down"><svg><use href="#tri-down"/></svg></button>
        </div>
        <div class="scroll horizontal">
          <i class="split"></i>
          <button aria-label="Scroll left"><svg><use href="#tri-left"/></svg></button>
          <div class="track"><div class="thumb"></div></div>
          <button aria-label="Scroll right"><svg><use href="#tri-right"/></svg></button>
        </div>
      </div>

      <aside class="task-pane">
        <button class="task" aria-label="SolidWorks Resources"><svg class="icon"><use href="#home"/></svg></button>
        <button class="task" aria-label="Design Library"><svg class="icon"><use href="#library"/></svg></button>
        <button class="task" aria-label="File Explorer"><svg class="icon"><use href="#explorer"/></svg></button>
        <button class="task" aria-label="Search"><svg class="icon"><use href="#sw-search"/></svg></button>
        <button class="task current" aria-label="View Palette"><svg class="icon"><use href="#palette"/></svg></button>
        <button class="chevron" aria-label="Open task pane"><svg class="icon"><use href="#expand"/></svg></button>
        <div class="rails"></div>
        <button class="chevron" aria-label="Open task pane"><svg class="icon"><use href="#expand"/></svg></button>
      </aside>

      <div class="side-tools right">
        <i class="grip"></i>
        <div class="tool-column">
          <button class="tool" aria-label="Sketch"><svg><use href="#sk-edit"/></svg></button>
          <button class="tool" aria-label="3D Sketch"><svg><use href="#sk-3d"/></svg></button>
          <button class="tool" aria-label="Modify sketch"><svg><use href="#sk-modify"/></svg></button>
          <i class="sep"></i>
          <button class="tool" aria-label="Add relation"><svg><use href="#sk-perp"/></svg></button>
          <button class="tool" aria-label="Display relations"><svg><use href="#sk-rel"/></svg></button>
          <i class="sep"></i>
        </div>
        <div class="tool-column sketch">
          <button class="tool" aria-label="Line"><svg><use href="#sk-line"/></svg></button>
          <button class="tool" aria-label="Centerline"><svg><use href="#sk-center"/></svg></button>
          <button class="tool" aria-label="Rectangle"><svg><use href="#sk-rect"/></svg></button>
          <button class="tool" aria-label="Polygon"><svg><use href="#sk-poly"/></svg></button>
          <button class="tool" aria-label="Circle"><svg><use href="#sk-circle"/></svg></button>
          <button class="tool" aria-label="Ellipse"><svg><use href="#sk-circle"/></svg></button>
          <button class="tool" aria-label="Perimeter circle"><svg><use href="#sk-percircle"/></svg></button>
          <button class="tool" aria-label="Tangent arc"><svg><use href="#sk-arc"/></svg></button>
          <button class="tool" aria-label="3 point arc"><svg><use href="#sk-arc3"/></svg></button>
          <button class="tool" aria-label="Sketch fillet"><svg><use href="#sk-fillet"/></svg></button>
          <button class="tool" aria-label="Sketch chamfer"><svg><use href="#sk-chamfer"/></svg></button>
          <button class="tool" aria-label="Spline"><svg><use href="#sk-spline"/></svg></button>
          <button class="tool" aria-label="Sketch point"><svg><use href="#point"/></svg></button>
          <button class="tool" aria-label="Text"><svg><use href="#sk-text"/></svg></button>
          <button class="tool" aria-label="Mirror entities"><svg><use href="#sk-mirror"/></svg></button>
          <button class="tool" aria-label="Convert entities"><svg><use href="#sk-convert"/></svg></button>
          <button class="tool" aria-label="Offset entities"><svg><use href="#sk-offset"/></svg></button>
          <button class="tool" aria-label="Trim entities"><svg><use href="#sk-trim"/></svg></button>
          <button class="tool" aria-label="Extend entities"><svg><use href="#sk-ext"/></svg></button>
          <button class="tool" aria-label="Smart dimension"><svg><use href="#sk-dim"/></svg></button>
          <button class="tool" aria-label="Move entities"><svg><use href="#sk-move"/></svg></button>
          <button class="tool" aria-label="Copy entities"><svg><use href="#sk-copy"/></svg></button>
          <button class="tool" aria-label="Linear sketch pattern"><svg><use href="#sk-grid"/></svg></button>
          <button class="tool" aria-label="Circular sketch pattern"><svg><use href="#sk-ring"/></svg></button>
        </div>
        <i class="rule"></i>
      </div>
    </main>

    <div class="toolbars bottom">
      <div class="toolbar sheet-metal">
        <i class="grip"></i>
        <button class="tool" aria-label="Base flange"><svg><use href="#flange"/></svg></button>
        <button class="tool" aria-label="Edge flange"><svg><use href="#edge"/></svg></button>
        <button class="tool" aria-label="Miter flange"><svg><use href="#miter"/></svg></button>
        <button class="tool" aria-label="Hem"><svg><use href="#hem"/></svg></button>
        <button class="tool" aria-label="Sketched bend"><svg><use href="#jog"/></svg></button>
        <button class="tool" aria-label="Closed corner"><svg><use href="#grid4"/></svg></button>
        <button class="tool" aria-label="Jog"><svg><use href="#step"/></svg></button>
        <button class="tool" aria-label="Break corner"><svg><use href="#fold"/></svg></button>
        <button class="tool" aria-label="Lofted bend"><svg><use href="#cone"/></svg></button>
        <i class="sep"></i>
        <button class="tool" aria-label="Cut"><svg><use href="#cut"/></svg></button>
        <button class="tool" aria-label="Simple hole"><svg><use href="#cut"/></svg></button>
        <i class="sep"></i>
        <button class="tool" aria-label="Unfold"><svg><use href="#arrows"/></svg></button>
        <button class="tool" aria-label="Fold"><svg><use href="#lift"/></svg></button>
        <button class="tool" aria-label="Flatten"><svg><use href="#flat"/></svg></button>
        <button class="tool" aria-label="No bends"><svg><use href="#knob"/></svg></button>
        <i class="sep"></i>
        <button class="tool" aria-label="Insert bends"><svg><use href="#corner"/></svg></button>
        <button class="tool" aria-label="Rip"><svg><use href="#knob"/></svg></button>
      </div>
      <div class="toolbar weldments">
        <i class="grip"></i>
        <button class="tool" aria-label="3D Sketch"><svg><use href="#weld"/></svg></button>
        <button class="tool" aria-label="Weldment"><svg><use href="#trim"/></svg></button>
        <button class="tool" aria-label="Structural member"><svg><use href="#cut"/></svg></button>
        <button class="tool" aria-label="Trim/Extend"><svg><use href="#pipe"/></svg></button>
        <button class="tool" aria-label="Extrude"><svg><use href="#boss"/></svg></button>
        <button class="tool" aria-label="Extrude cut"><svg><use href="#boss"/></svg></button>
        <button class="tool" aria-label="End cap"><svg><use href="#round"/></svg></button>
        <button class="tool" aria-label="Gusset"><svg><use href="#wedge"/></svg></button>
        <button class="tool" aria-label="Fillet bead"><svg><use href="#cut"/></svg></button>
        <button class="tool" aria-label="Hole wizard"><svg><use href="#hole"/></svg></button>
        <button class="tool" aria-label="Chamfer"><svg><use href="#fillet"/></svg></button>
        <button class="tool" aria-label="Reference geometry"><svg><use href="#plane"/></svg></button>
        <button class="tool drop" aria-label="More"><svg><use href="#down"/></svg></button>
      </div>
    </div>

    <footer class="status">
      <p>Select field in callout to edit array contents or click on arrow to reverse direction</p>
      <i class="cell"></i><i class="cell"></i>
      <span>Editing Part</span>
      <i class="cell"></i><i class="cell"></i>
      <button aria-label="Quick tips"><svg class="icon"><use href="#tip"/></svg></button>
    </footer>
  </div>
</body>
</html>
```
FILE: styles.css
```css
* {
  box-sizing: border-box;
}
body {
  margin: 0;
  height: 100vh;
  display: flex;
  flex-direction: column;
  overflow: hidden;
  background: #000;
  border-bottom: 3px solid #000;
  font: 8px/10px "Liberation Sans", Arial, sans-serif;
  color: #000;
}
h1, h2, h3, h4, p {
  margin: 0;
  font-size: 8px;
}
button, input, select {
  margin: 0;
  padding: 0;
  border: 0;
  border-radius: 0;
  background: none;
  font: inherit;
  color: inherit;
  appearance: none;
}
svg {
  display: block;
  fill: none;
}
.sprite {
  position: absolute;
  width: 0;
  height: 0;
}
.icon {
  width: 14px;
  height: 14px;
  flex: none;
}
.soft {
  fill: currentColor;
  fill-opacity: 0.5;
}
.solid {
  fill: currentColor;
  stroke: none;
}
.bold {
  stroke-width: 1.6;
}
.heavy {
  stroke-width: 2.4;
}

/* title and menu */
.title-bar {
  display: flex;
  align-items: center;
  height: 19px;
  flex: none;
  padding: 0 2px 0 6px;
  background: linear-gradient(90deg, #0a55e0, #1f70f2 50%, #3f97ff);
  color: #fff;
}
.title-bar h1 {
  flex: 1;
  margin-left: 3px;
  font: bold 9px/12px "Noto Sans", sans-serif;
  white-space: nowrap;
}
.win-buttons {
  display: flex;
}
.win-buttons button {
  display: flex;
  align-items: center;
  justify-content: center;
  width: 12px;
  height: 11px;
  background: #ece9d8;
  border: 1px solid;
  border-color: #fff #716f64 #716f64 #fff;
}
.win-buttons.tall button {
  height: 14px;
}
.win-buttons .apart {
  margin-left: 2px;
}
.win-buttons svg {
  width: 9px;
  height: 9px;
}
.frame {
  position: relative;
  flex: 1;
  min-height: 0;
  display: flex;
  flex-direction: column;
  border-left: 3px solid #0a4c9f;
  background: #ece9d8;
}
.back-window {
  position: absolute;
  left: -3px;
  top: 61px;
  width: 4px;
  height: 41px;
  background: linear-gradient(#ece9d8 4px, #5aa0f5 4px, #5aa0f5 16px, #ece9d8 16px);
  border-right: 1px solid #888;
  border-bottom: 1px solid #888;
}
.menu-bar {
  display: flex;
  align-items: center;
  height: 16px;
  flex: none;
  padding: 0 2px 0 3px;
  border-bottom: 1px solid #c9c6b6;
}
.menu-bar > button {
  padding: 0 3px;
  margin-right: 3px;
}
.search {
  display: flex;
  align-items: center;
  width: 147px;
  height: 12px;
  margin-left: auto;
  margin-right: 8px;
  padding-left: 2px;
  border: 1px solid #8b8a84;
  border-radius: 6px;
  background: #fbfbf9;
}
.search .icon {
  width: 16px;
}
.search input {
  flex: 1;
  min-width: 0;
  height: 10px;
  padding-left: 2px;
}
.caret {
  border: 3px solid transparent;
  border-top-color: #000;
  border-bottom: 0;
}
.search .caret {
  margin-left: 1px;
}

/* toolbars */
.toolbars {
  display: flex;
  flex: none;
  height: 23px;
  color: #bbb693;
}
.top {
  border-bottom: 2px solid #77756a;
}
.bottom {
  border-top: 1px solid #fff;
  border-bottom: 1px solid #b5b2a2;
}
.toolbar {
  display: flex;
  align-items: center;
  justify-content: space-between;
  flex: none;
  padding: 0 2px 0 4px;
  border-right: 1px solid #b5b2a2;
  border-top: 1px solid #f8f7f0;
}
.standard { width: 418px; }
.view { width: 412px; }
.sheet-metal { width: 323px; }
.weldments { width: 226px; }
.tool {
  display: flex;
  align-items: center;
  justify-content: center;
  width: 17px;
  height: 17px;
  flex: none;
}
.tool svg {
  width: 14px;
  height: 14px;
  flex: none;
  stroke: currentColor;
}
.tool.drop {
  width: 9px;
}
.tool.drop svg {
  width: 8px;
}
.tool.pressed {
  background: #f8f7f2;
  border: 1px solid;
  border-color: #b0ad9c #fff #fff #b0ad9c;
}
.grip {
  width: 5px;
  height: 17px;
  flex: none;
  border: 1px solid #c3c0b0;
  border-width: 0 1px;
  background: #f8f7f0;
}
.sep {
  width: 1px;
  height: 15px;
  margin: 0 2px;
  background: #c3c0b0;
}

/* work area */
.workspace {
  flex: 1;
  min-height: 0;
  display: flex;
}
.side-tools {
  display: flex;
  flex-direction: column;
  align-items: center;
  flex: none;
  padding-top: 4px;
  color: #bbb693;
}
.left {
  width: 22px;
}
.right {
  width: 23px;
}
.side-tools .grip {
  width: 17px;
  height: 4px;
  border-width: 1px 0;
  margin-bottom: 2px;
}
.side-tools .sep {
  width: 17px;
  height: 1px;
  margin: 3px 0;
}
.rule {
  align-self: stretch;
  height: 1px;
  margin-bottom: 4px;
  background: #b5b2a2;
}
.tool-column {
  display: flex;
  flex-direction: column;
  align-items: center;
  justify-content: space-around;
}
.features {
  height: 282px;
}
.sketch {
  height: 414px;
}

/* property manager */
.manager {
  display: flex;
  flex-direction: column;
  width: 185px;
  flex: none;
  padding-top: 4px;
  border: solid #77756a;
  border-width: 1px 1px 0 2px;
}
.tabs {
  display: flex;
  height: 20px;
  flex: none;
  border-top: 1px solid #77756a;
}
.tabs button {
  display: flex;
  align-items: center;
  justify-content: center;
  width: 21px;
  border-right: 1px solid #8b897c;
}
.tabs .active {
  background: #fbfbf9;
}
.tabs .icon {
  width: 13px;
  height: 13px;
}
.sheet {
  flex: 1;
  background: #fff;
  padding: 0 3px;
  margin-right: 2px;
  border-right: 1px solid #b5b2a2;
}
.manager h2 {
  display: flex;
  align-items: center;
  height: 18px;
  margin: 0 -3px;
  padding-left: 1px;
  gap: 1px;
  background: #aba99c;
  color: #fff;
  font-size: 11px;
}
.confirm {
  display: flex;
  justify-content: center;
  gap: 3px;
  padding: 3px 0 4px;
}
.confirm button {
  width: 21px;
  height: 21px;
  padding: 2px;
  border: 1px solid #9a9a9a;
  border-radius: 50%;
  background: #fbfbfb;
}
.confirm .icon {
  width: 15px;
  height: 15px;
}
.group {
  margin-bottom: 5px;
  border: 1px solid #b5b2a2;
  background: #ece9d8;
}
.group.collapsed {
  margin-bottom: 9px;
}
.group h3 {
  display: flex;
  align-items: center;
  justify-content: space-between;
  height: 14px;
  padding: 0 1px 0 3px;
  border-bottom: 1px solid #aba897;
  background: linear-gradient(#f7f6f3, #c3c0b4);
  font-size: 9px;
}
.group.collapsed h3 {
  height: 13px;
  border-bottom: 0;
}
.group h3 label {
  display: flex;
  align-items: center;
  gap: 2px;
  padding-left: 7px;
}
.group h3 .icon {
  width: 12px;
  height: 12px;
}
.flip {
  transform: rotate(180deg);
}
.group-body {
  padding: 0 8px 6px 3px;
}
.row {
  display: flex;
  align-items: center;
  height: 18px;
}
.row.field {
  height: 22px;
}
.row.short {
  height: 20px;
}
.row.line {
  height: 17px;
  padding-left: 22px;
}
.row.normal {
  padding-left: 22px;
}
.field > .icon {
  margin-right: 8px;
}
.dir {
  width: 18px;
  height: 18px;
  margin-right: 4px;
  padding: 2px;
  border: 1px solid #c3c0b0;
}
.dir .icon {
  width: 12px;
  height: 12px;
}
.row input[type="text"] {
  flex: 1;
  min-width: 0;
  height: 17px;
  padding: 0 3px;
  background: #dfdfdf;
  border: 1px solid;
  border-color: #85837a #f8f7f2 #f8f7f2 #85837a;
}
.spin {
  display: flex;
  flex-direction: column;
  width: 12px;
  gap: 1px;
}
.spin button {
  height: 8px;
  overflow: hidden;
  border: 1px solid;
  border-color: #fff #85837a #85837a #fff;
  font-size: 5px;
  line-height: 5px;
}
.tick {
  gap: 4px;
}
.outdent {
  padding-left: 20px;
}
input[type="checkbox"] {
  width: 9px;
  height: 9px;
  flex: none;
  background: #e4e4e0;
  border: 1px solid;
  border-color: #85837a #fff #fff #85837a;
}
input[type="checkbox"]:checked::after {
  content: "";
  display: block;
  width: 4px;
  height: 6px;
  margin-left: 2px;
  border: solid #000;
  border-width: 0 2px 2px 0;
  transform: rotate(40deg);
}
input[type="checkbox"]:disabled {
  background: #ece9d8;
}
input[type="checkbox"]:disabled + span {
  color: #b3b09f;
}
input[type="radio"] {
  width: 8px;
  height: 8px;
  margin-left: 1px;
  flex: none;
  border-radius: 50%;
  background: #e4e4e0;
  border: 1px solid;
  border-color: #85837a #fff #fff #85837a;
}
input[type="radio"]:checked {
  background: radial-gradient(#000 35%, #e4e4e0 45%);
}
.picker {
  display: flex;
  align-items: flex-start;
  padding: 4px 8px 6px 5px;
}
.picker .icon {
  margin-right: 7px;
}
.picker select {
  flex: 1;
  height: 41px;
  overflow: hidden;
  background: #dfdfdf;
  border: 1px solid;
  border-color: #85837a #f8f7f2 #f8f7f2 #85837a;
}
.picker .active {
  padding-top: 1px;
  background: #ff8080;
}
.picker option {
  min-height: 10px;
  padding: 0 1px;
  line-height: 10px;
}
.options {
  padding: 0 0 2px 26px;
}
.splitter {
  display: flex;
  flex-direction: column;
  justify-content: center;
  align-items: center;
  gap: 4px;
  width: 4px;
  flex: none;
  padding-bottom: 14px;
  border-right: 1px solid #77756a;
}
.splitter i {
  width: 2px;
  height: 2px;
  background: #000;
}

/* graphics area */
.viewport {
  flex: 1;
  min-width: 0;
  display: grid;
  grid-template: 1fr 12px / 1fr 13px;
}
.canvas {
  position: relative;
  overflow: hidden;
  background: #fff;
}
.model {
  position: absolute;
  width: 100%;
  height: 100%;
}
.belt {
  fill: #545454;
  stroke: #000;
}
.path {
  stroke: #00c81c;
  stroke-width: 2;
}
.teeth {
  stroke: #d8d020;
}
.triad {
  position: absolute;
  left: 21px;
  bottom: 36px;
  width: 36px;
  height: 40px;
}
.flyout {
  position: absolute;
  left: 0;
  top: 0;
  display: flex;
  align-items: center;
  height: 17px;
  padding: 0 6px 0 3px;
  border: solid #000;
  border-width: 0 2px 2px 0;
  background: #fff;
  color: #a8141c;
}
.flyout i {
  width: 6px;
  height: 1px;
  background: #999;
}
.flyout .icon {
  margin-right: 1px;
}
.plus {
  width: 6px;
  height: 6px;
  border: 1px solid #666;
  color: #000;
  font-size: 6px;
  line-height: 4px;
}
.confirm-corner {
  position: absolute;
  right: 0;
  top: 0;
  width: 77px;
  height: 77px;
}
.confirm-corner button {
  position: absolute;
  opacity: 0.5;
}
.confirm-corner .icon {
  width: 22px;
  height: 22px;
}
.ok {
  left: 29px;
  top: 2px;
}
.no {
  left: 51px;
  top: 27px;
}
.callout {
  position: absolute;
  left: 174px;
  top: 619px;
  display: grid;
  grid-template: 11px 10px 10px / 41px 31px;
  border: 1px solid #000;
  background: #c6c6c6;
  box-shadow: 1px 1px #000;
}
.callout h4 {
  grid-column: 1 / 3;
  padding-right: 4px;
  font-weight: normal;
  text-align: center;
}
.callout label {
  padding-left: 2px;
}
.callout input {
  width: 100%;
  height: 10px;
  padding-left: 1px;
  background: #fff;
  border: solid #000;
  border-width: 1px 0 0 1px;
}
.view-name {
  position: absolute;
  left: 0;
  bottom: 0;
  display: flex;
  align-items: center;
  width: 75px;
  height: 14px;
  border: solid #000;
  border-width: 1px 1px 0 0;
  background: #ffffd6;
}
.view-name select {
  flex: 1;
  height: 13px;
  padding-left: 15px;
  border-right: 1px solid #000;
}
.view-name .caret {
  margin: 0 1px;
}
.scroll {
  display: flex;
  background: #f6f5ee;
}
.scroll.vertical {
  flex-direction: column;
}
.scroll button {
  display: flex;
  align-items: center;
  justify-content: center;
  width: 12px;
  height: 12px;
  flex: none;
  background: #ece9d8;
  border: 1px solid;
  border-color: #fff #716f64 #716f64 #fff;
}
.scroll svg {
  width: 10px;
  height: 10px;
}
.scroll .track {
  flex: 1;
}
.split {
  width: 12px;
  height: 5px;
  background: #ece9d8;
  border: solid #55534a;
  border-width: 0 0 2px;
}
.horizontal .split {
  width: 5px;
  height: 12px;
  border-width: 0 1px 0 0;
}
.thumb {
  width: 54px;
  height: 12px;
  margin-left: 55px;
  background: #ece9d8;
  border: 1px solid;
  border-color: #fff #85837a #85837a #fff;
}

/* task pane */
.task-pane {
  display: flex;
  flex-direction: column;
  width: 19px;
  flex: none;
  padding-top: 19px;
  padding-bottom: 54px;
  border-left: 1px solid #a9b8b4;
}
.task {
  width: 15px;
  height: 20px;
  flex: none;
  border: 1px solid #a9b4bc;
  border-left: 0;
  border-radius: 0 3px 3px 0;
  background: #f1f0ea;
}
.task .icon {
  width: 12px;
  height: 14px;
}
.task.current {
  background: #fff;
  border-right: 2px solid #f0982c;
}
.chevron {
  width: 12px;
  height: 15px;
  margin-left: 1px;
  flex: none;
}
.chevron .icon {
  width: 12px;
  height: 12px;
  transform: rotate(-90deg);
}
.rails {
  flex: 1;
  width: 5px;
  margin: 5px 0 4px 4px;
  border: solid #b5b2a2;
  border-width: 0 1px;
  background: #f8f7f0;
}

/* status bar */
.status {
  display: flex;
  align-items: center;
  height: 14px;
  flex: none;
  padding: 0 34px 0 1px;
  border-top: 1px solid #fff;
}
.status p {
  flex: 1;
  font-weight: normal;
}
.status span {
  margin-right: 6px;
  padding: 1px 4px;
  border: 1px solid;
  border-color: #aca899 #fff #fff #aca899;
}
.cell {
  width: 6px;
  height: 11px;
  border-left: 1px solid #aca899;
}
.status .icon {
  width: 12px;
  height: 12px;
}
```
